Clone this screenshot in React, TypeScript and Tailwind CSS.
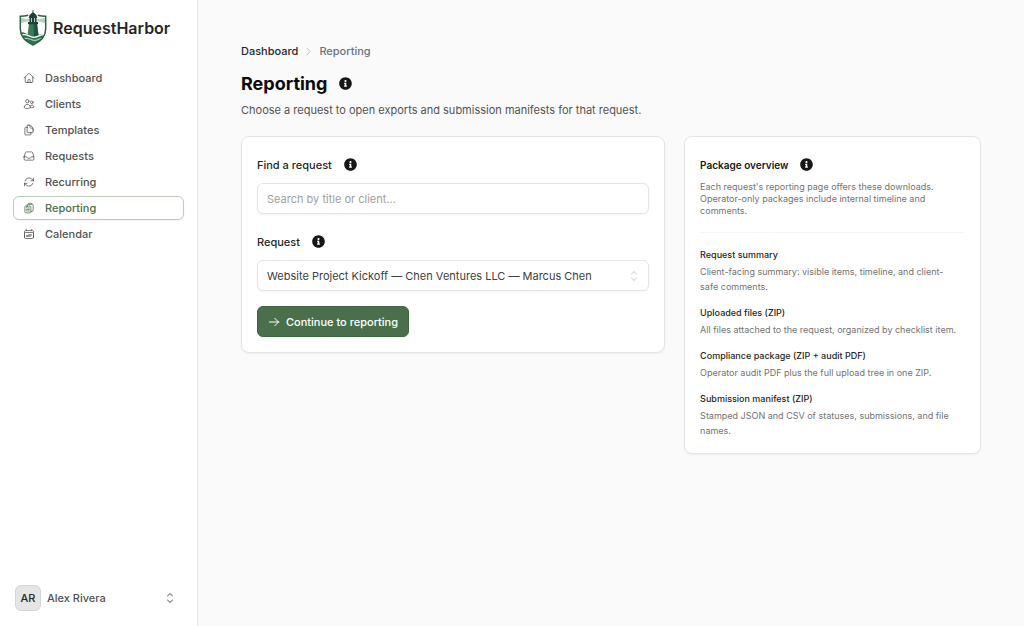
import type { ReactNode } from 'react';
import { FaInfoCircle } from 'react-icons/fa';
import {
  HiChevronUpDown,
  HiOutlineArrowPath,
  HiOutlineArrowRight,
  HiOutlineCalendarDays,
  HiOutlineChevronRight,
  HiOutlineClipboardDocumentList,
  HiOutlineDocumentDuplicate,
  HiOutlineHome,
  HiOutlineInbox,
  HiOutlineUsers,
} from 'react-icons/hi2';

const navItems = [
  { label: 'Dashboard', icon: HiOutlineHome },
  { label: 'Clients', icon: HiOutlineUsers },
  { label: 'Templates', icon: HiOutlineDocumentDuplicate },
  { label: 'Requests', icon: HiOutlineInbox },
  { label: 'Recurring', icon: HiOutlineArrowPath },
  { label: 'Reporting', icon: HiOutlineClipboardDocumentList, current: true },
  { label: 'Calendar', icon: HiOutlineCalendarDays },
];

const packages = [
  {
    title: 'Request summary',
    description: 'Client-facing summary: visible items, timeline, and client-safe comments.',
  },
  {
    title: 'Uploaded files (ZIP)',
    description: 'All files attached to the request, organized by checklist item.',
  },
  {
    title: 'Compliance package (ZIP + audit PDF)',
    description: 'Operator audit PDF plus the full upload tree in one ZIP.',
  },
  {
    title: 'Submission manifest (ZIP)',
    description: 'Stamped JSON and CSV of statuses, submissions, and file names.',
  },
];

function Logo() {
  return (
    <svg viewBox="0 0 28 36" className="h-9 w-7 shrink-0" aria-hidden="true">
      <path d="M1.5 6 Q6.500 5.800 10 4.200 L18 4.200 Q21.500 5.800 26.500 6 V19 C26.500 27 20.500 32 14 35 C7.500 32 1.500 27 1.500 19 Z" fill="#fff" />
      <path d="M2 8 L11 9.500 V11 L2 13 Z M26 8 L17 9.500 V11 L26 13 Z" fill="#b4d3bb" />
      <path d="M2 22.500 C7 21 9 27.500 14.500 26.500 C19 25.800 21 23.500 26 24 C24 29.500 19 32.600 14 34.500 C7 31.500 3 27.500 2 22.500 Z" fill="#2f7551" />
      <path d="M10 14 H18 L19.800 27 H8.200 Z" fill="#3a7a58" />
      <path d="M14.500 14 H18 L19.800 27 H15 Z" fill="#1d5540" />
      <path d="M9 12 H19 V14.300 H9 Z M10.500 7.800 H12 V12.500 H10.500 Z M16 7.800 H17.500 V12.500 H16 Z M12.700 7.800 H15.300 V12.500 H12.700 Z" fill="#1c4136" />
      <path d="M13.600 0 H14.400 V2.200 Q17.500 4 18.300 7.900 H9.700 Q10.500 4 13.600 2.200 Z" fill="#1c4136" />
      <path d="M2.500 25 C8 22.800 11 28.300 16 27.200 C20 26.400 22 24 25.800 24.800" fill="none" stroke="#fff" strokeWidth="1.300" />
      <path d="M5 28.500 C10 27.300 13 31.300 17 30.300 C19.500 29.600 21 28.400 23 28.600" fill="none" stroke="#c4dfcb" strokeWidth="1" />
      <path d="M9.200 5.200 Q5.500 6.300 1.300 6.300 V19 C1.300 27 7 31.800 14 35 C21 31.800 26.700 27 26.700 19 V6.300 Q22.500 6.300 18.800 5.200" fill="none" stroke="#2c6049" strokeWidth="1.500" />
    </svg>
  );
}

function InfoButton({ label }: { label: string }) {
  return (
    <button type="button" aria-label={label} className="flex size-[25px] items-center justify-center text-neutral-900">
      <FaInfoCircle className="size-[13px]" />
    </button>
  );
}

function Card({ children }: { children: ReactNode }) {
  return <section className="rounded-lg border border-neutral-200 bg-white p-[15px] shadow-xs">{children}</section>;
}

export default function App() {
  return (
    <div className="flex min-h-screen bg-neutral-50 font-[Inter,sans-serif] text-[11px] leading-4 text-neutral-600">
      <aside className="flex w-[198px] shrink-0 flex-col border-r border-neutral-200 bg-white px-[13px] pt-2.5 pb-[15px]">
        <a href="#" className="flex items-center gap-1.5 pl-1.5 text-base font-semibold text-neutral-800">
          <Logo />
          RequestHarbor
        </a>

        <nav className="mt-5 flex flex-col gap-0.5">
          {navItems.map((item) => (
            <a
              key={item.label}
              href="#"
              aria-current={item.current ? 'page' : undefined}
              className={
                item.current
                  ? 'flex h-6 items-center gap-2.5 rounded-md border border-[#bccdbd] bg-white px-[9px] font-medium text-[#4a6f4b] shadow-xs'
                  : 'flex h-6 items-center gap-2.5 rounded-md border border-transparent px-[9px] font-medium text-neutral-600'
              }
            >
              <item.icon className="size-3" />
              {item.label}
            </a>
          ))}
        </nav>

        <button type="button" className="mt-auto flex items-center gap-1.5 px-0.5 text-left font-medium">
          <span className="flex size-[26px] items-center justify-center rounded-md border border-neutral-300 bg-neutral-200 text-neutral-800">
            AR
          </span>
          Alex Rivera
          <HiChevronUpDown className="mr-1 ml-auto size-4 text-neutral-500" />
        </button>
      </aside>

      <main className="min-w-0 flex-1 p-[43px]">
        <nav aria-label="Breadcrumb" className="flex items-center font-medium">
          <a href="#" className="text-neutral-800">Dashboard</a>
          <HiOutlineChevronRight className="mx-[5px] size-[11px] text-neutral-400" />
          <span className="text-gray-500">Reporting</span>
        </nav>

        <div className="mt-3 flex items-center gap-1.5">
          <h1 className="text-lg leading-6 font-bold text-neutral-950">Reporting</h1>
          <InfoButton label="About reporting" />
        </div>
        <p className="mt-1.5">Choose a request to open exports and submission manifests for that request.</p>

        <div className="mt-[18px] grid items-start gap-[19px] md:grid-cols-[10fr_7fr]">
          <Card>
            <form>
              <div className="flex items-center gap-1.5">
                <label htmlFor="search" className="font-medium text-neutral-800">Find a request</label>
                <InfoButton label="About finding a request" />
              </div>
              <input
                id="search"
                type="text"
                placeholder="Search by title or client..."
                className="mt-1.5 h-[31px] w-full rounded-md border border-neutral-200 bg-white px-[9px] shadow-xs placeholder:text-neutral-400"
              />

              <div className="mt-[15px] flex items-center gap-1.5">
                <label htmlFor="request" className="font-medium text-neutral-800">Request</label>
                <InfoButton label="About requests" />
              </div>
              <div className="relative mt-1.5">
                <select
                  id="request"
                  className="h-[31px] w-full appearance-none rounded-md border border-neutral-200 bg-white px-[9px] text-neutral-700 shadow-xs"
                >
                  <option>Website Project Kickoff — Chen Ventures LLC — Marcus Chen</option>
                </select>
                <HiChevronUpDown className="pointer-events-none absolute top-2 right-[7px] size-4 text-neutral-300" />
              </div>

              <button
                type="submit"
                className="mt-[15px] flex h-[31px] items-center gap-1.5 rounded-md border border-[#426343] bg-[#4a6f4b] px-2.5 font-medium text-white shadow-xs"
              >
                <HiOutlineArrowRight className="size-3 stroke-2" />
                Continue to reporting
              </button>
            </form>
          </Card>

          <Card>
            <div className="flex items-center gap-1.5">
              <h2 className="text-[10px] font-semibold text-neutral-900">Package overview</h2>
              <InfoButton label="About packages" />
            </div>
            <p className="mt-1 text-[9px] leading-3 text-neutral-500">
              Each request's reporting page offers these downloads. Operator-only packages include internal timeline
              and comments.
            </p>
            <hr className="my-[15px] border-neutral-100" />
            <dl className="space-y-3 text-[9px]">
              {packages.map((item) => (
                <div key={item.title}>
                  <dt className="leading-[13px] font-medium text-neutral-800">{item.title}</dt>
                  <dd className="mt-[3px] pr-1.5 leading-[15px] text-neutral-500">{item.description}</dd>
                </div>
              ))}
            </dl>
          </Card>
        </div>
      </main>
    </div>
  );
}
